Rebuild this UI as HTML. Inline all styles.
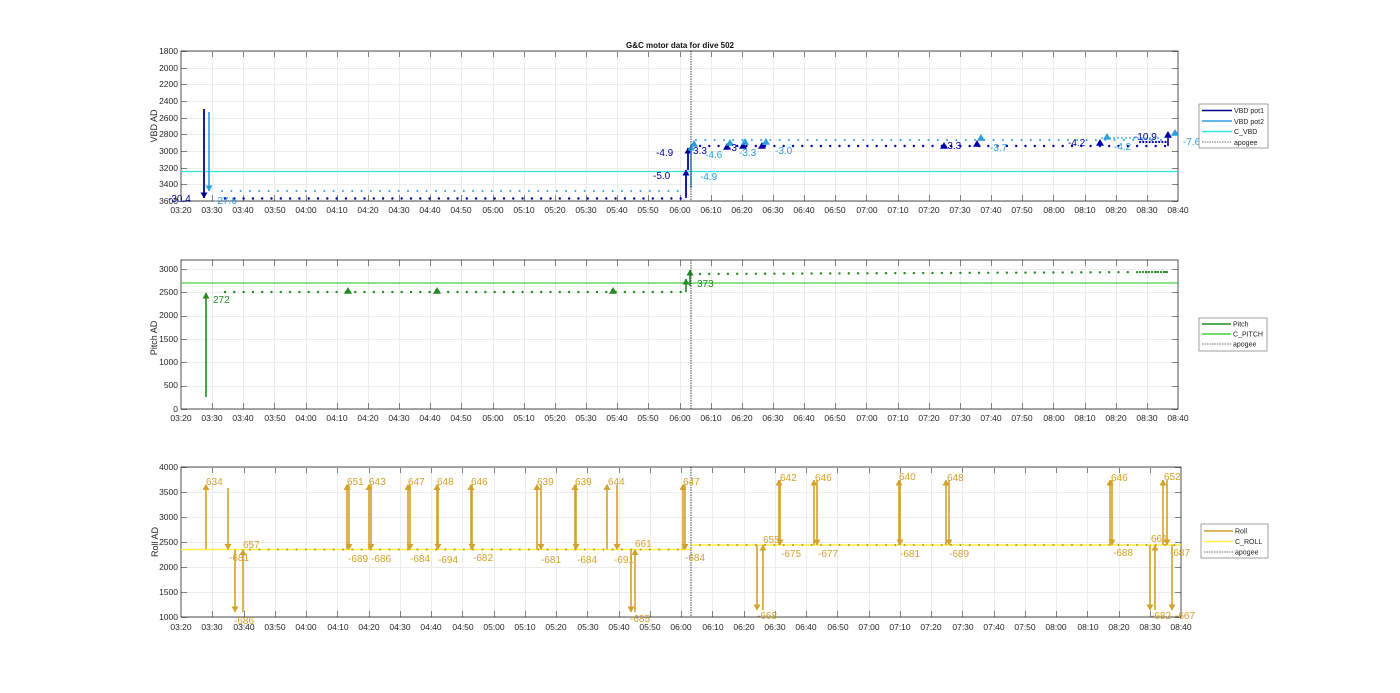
<!DOCTYPE html>
<html><head><meta charset="utf-8"><style>
html,body{margin:0;padding:0;background:#fff;width:1400px;height:693px;overflow:hidden}
svg text{font-family:"Liberation Sans",sans-serif;}
.tk{font-size:8.5px;fill:#262626}
</style></head><body>
<svg id="s" width="1400" height="693" viewBox="0 0 1400 693" xmlns="http://www.w3.org/2000/svg">
<g id="axes"></g>
<text x="680" y="48" font-size="8" font-weight="bold" text-anchor="middle" fill="#111">G&amp;C motor data for dive 502</text>
<text transform="translate(157,126) rotate(-90)" font-size="9" text-anchor="middle" fill="#262626">VBD AD</text>
<text transform="translate(157,338) rotate(-90)" font-size="9" text-anchor="middle" fill="#262626">Pitch AD</text>
<text transform="translate(158,542) rotate(-90)" font-size="9" text-anchor="middle" fill="#262626">Roll AD</text>
<g class="tk" text-anchor="end">
<text x="178" y="54">1800</text><text x="178" y="71">2000</text><text x="178" y="87">2200</text><text x="178" y="104">2400</text><text x="178" y="121">2600</text><text x="178" y="137">2800</text><text x="178" y="154">3000</text><text x="178" y="171">3200</text><text x="178" y="187">3400</text><text x="178" y="204">3600</text>
<text x="178" y="272">3000</text><text x="178" y="295">2500</text><text x="178" y="318">2000</text><text x="178" y="342">1500</text><text x="178" y="365">1000</text><text x="178" y="388">500</text><text x="178" y="412">0</text>
<text x="178" y="470">4000</text><text x="178" y="495">3500</text><text x="178" y="520">3000</text><text x="178" y="545">2500</text><text x="178" y="570">2000</text><text x="178" y="595">1500</text><text x="178" y="620">1000</text>
</g>
<g class="tk" text-anchor="middle">
<text x="181" y="213">03:20</text><text x="212" y="213">03:30</text><text x="243" y="213">03:40</text><text x="275" y="213">03:50</text><text x="306" y="213">04:00</text><text x="337" y="213">04:10</text><text x="368" y="213">04:20</text><text x="399" y="213">04:30</text><text x="430" y="213">04:40</text><text x="461" y="213">04:50</text><text x="493" y="213">05:00</text><text x="524" y="213">05:10</text><text x="555" y="213">05:20</text><text x="586" y="213">05:30</text><text x="617" y="213">05:40</text><text x="648" y="213">05:50</text><text x="680" y="213">06:00</text><text x="711" y="213">06:10</text><text x="742" y="213">06:20</text><text x="773" y="213">06:30</text><text x="804" y="213">06:40</text><text x="835" y="213">06:50</text><text x="867" y="213">07:00</text><text x="898" y="213">07:10</text><text x="929" y="213">07:20</text><text x="960" y="213">07:30</text><text x="991" y="213">07:40</text><text x="1022" y="213">07:50</text><text x="1054" y="213">08:00</text><text x="1085" y="213">08:10</text><text x="1116" y="213">08:20</text><text x="1147" y="213">08:30</text><text x="1178" y="213">08:40</text>
</g>
<g class="tk" text-anchor="middle">
<text x="181" y="421">03:20</text><text x="212" y="421">03:30</text><text x="243" y="421">03:40</text><text x="275" y="421">03:50</text><text x="306" y="421">04:00</text><text x="337" y="421">04:10</text><text x="368" y="421">04:20</text><text x="399" y="421">04:30</text><text x="430" y="421">04:40</text><text x="461" y="421">04:50</text><text x="493" y="421">05:00</text><text x="524" y="421">05:10</text><text x="555" y="421">05:20</text><text x="586" y="421">05:30</text><text x="617" y="421">05:40</text><text x="648" y="421">05:50</text><text x="680" y="421">06:00</text><text x="711" y="421">06:10</text><text x="742" y="421">06:20</text><text x="773" y="421">06:30</text><text x="804" y="421">06:40</text><text x="835" y="421">06:50</text><text x="867" y="421">07:00</text><text x="898" y="421">07:10</text><text x="929" y="421">07:20</text><text x="960" y="421">07:30</text><text x="991" y="421">07:40</text><text x="1022" y="421">07:50</text><text x="1054" y="421">08:00</text><text x="1085" y="421">08:10</text><text x="1116" y="421">08:20</text><text x="1147" y="421">08:30</text><text x="1178" y="421">08:40</text>
</g>
<g class="tk" text-anchor="middle">
<text x="181" y="630">03:20</text><text x="212" y="630">03:30</text><text x="244" y="630">03:40</text><text x="275" y="630">03:50</text><text x="306" y="630">04:00</text><text x="338" y="630">04:10</text><text x="369" y="630">04:20</text><text x="400" y="630">04:30</text><text x="431" y="630">04:40</text><text x="463" y="630">04:50</text><text x="494" y="630">05:00</text><text x="525" y="630">05:10</text><text x="556" y="630">05:20</text><text x="588" y="630">05:30</text><text x="619" y="630">05:40</text><text x="650" y="630">05:50</text><text x="681" y="630">06:00</text><text x="713" y="630">06:10</text><text x="744" y="630">06:20</text><text x="775" y="630">06:30</text><text x="806" y="630">06:40</text><text x="838" y="630">06:50</text><text x="869" y="630">07:00</text><text x="900" y="630">07:10</text><text x="931" y="630">07:20</text><text x="963" y="630">07:30</text><text x="994" y="630">07:40</text><text x="1025" y="630">07:50</text><text x="1056" y="630">08:00</text><text x="1088" y="630">08:10</text><text x="1119" y="630">08:20</text><text x="1150" y="630">08:30</text><text x="1181" y="630">08:40</text>
</g>
<g id="data"></g>
<g font-size="10">
<text x="168" y="202" fill="#0000a8">-30.4</text>
<text x="214" y="204" fill="#2a9fe0">-27.6</text>
<text x="653" y="179" fill="#0000a8">-5.0</text>
<text x="656" y="156" fill="#0000a8">-4.9</text>
<text x="700" y="180" fill="#2a9fe0">-4.9</text>
<text x="693" y="154" fill="#0000a8">3.3</text>
<text x="705" y="158" fill="#2a9fe0">-4.6</text>
<text x="728" y="151" fill="#0000a8">-3</text>
<text x="739" y="156" fill="#2a9fe0">-3.3</text>
<text x="775" y="154" fill="#2a9fe0">-3.0</text>
<text x="944" y="149" fill="#0000a8">-3.3</text>
<text x="990" y="151" fill="#2a9fe0">-3.7</text>
<text x="1068" y="146" fill="#0000a8">-4.2</text>
<text x="1114" y="150" fill="#2a9fe0">-4.2</text>
<text x="1134" y="140" fill="#0000a8">-10.9</text>
<text x="1183" y="145" fill="#2a9fe0">-7.6</text>
</g>
<g font-size="10" fill="#228b22"><text x="213" y="303">272</text><text x="697" y="287">373</text></g>
<g font-size="10" fill="#d4a12a">
<text x="206" y="485">634</text><text x="229" y="561">-681</text><text x="234" y="624">-686</text><text x="243" y="548">657</text>
<text x="347" y="485">651</text><text x="348" y="562">-689</text><text x="369" y="485">643</text><text x="371" y="562">-686</text>
<text x="408" y="485">647</text><text x="410" y="562">-684</text><text x="437" y="485">648</text><text x="438" y="563">-694</text>
<text x="471" y="485">646</text><text x="473" y="561">-682</text><text x="537" y="485">639</text><text x="541" y="563">-681</text>
<text x="575" y="485">639</text><text x="577" y="563">-684</text><text x="608" y="485">644</text><text x="614" y="563">-691</text>
<text x="630" y="622">-685</text><text x="635" y="547">661</text><text x="683" y="485">647</text><text x="685" y="561">-684</text>
<text x="757" y="619">-668</text><text x="763" y="543">655</text><text x="780" y="481">642</text><text x="781" y="557">-675</text>
<text x="815" y="481">646</text><text x="818" y="557">-677</text><text x="899" y="480">640</text><text x="900" y="557">-681</text>
<text x="947" y="481">648</text><text x="949" y="557">-689</text><text x="1111" y="481">646</text><text x="1113" y="556">-688</text>
<text x="1151" y="619">-682</text><text x="1151" y="542">661</text><text x="1164" y="480">652</text><text x="1170" y="556">-687</text><text x="1175" y="619">-667</text>
</g>
<g font-size="7" fill="#222">
<rect x="1199" y="104" width="69" height="44" fill="#fff" stroke="#888" stroke-width="0.8"/>
<line x1="1202" y1="110.5" x2="1232" y2="110.5" stroke="#00008b" stroke-width="1.5"/><text x="1234" y="113">VBD pot1</text>
<line x1="1202" y1="121" x2="1232" y2="121" stroke="#2a9fe0" stroke-width="1.5"/><text x="1234" y="124">VBD pot2</text>
<line x1="1202" y1="131.5" x2="1232" y2="131.5" stroke="#30e6e6" stroke-width="1.5"/><text x="1234" y="134">C_VBD</text>
<line x1="1202" y1="142" x2="1232" y2="142" stroke="#444" stroke-width="0.8" stroke-dasharray="1.5,1"/><text x="1234" y="145">apogee</text>
<rect x="1199" y="318" width="68" height="33" fill="#fff" stroke="#888" stroke-width="0.8"/>
<line x1="1202" y1="324" x2="1231" y2="324" stroke="#228b22" stroke-width="1.5"/><text x="1233" y="326.5">Pitch</text>
<line x1="1202" y1="334" x2="1231" y2="334" stroke="#40d040" stroke-width="1.5"/><text x="1233" y="336.5">C_PITCH</text>
<line x1="1202" y1="344" x2="1231" y2="344" stroke="#444" stroke-width="0.8" stroke-dasharray="1.5,1"/><text x="1233" y="346.5">apogee</text>
<rect x="1201" y="524" width="67" height="34" fill="#fff" stroke="#888" stroke-width="0.8"/>
<line x1="1204" y1="531" x2="1233" y2="531" stroke="#d4a12a" stroke-width="1.5"/><text x="1235" y="533.5">Roll</text>
<line x1="1204" y1="541.5" x2="1233" y2="541.5" stroke="#ffee44" stroke-width="1.5"/><text x="1235" y="544">C_ROLL</text>
<line x1="1204" y1="552" x2="1233" y2="552" stroke="#444" stroke-width="0.8" stroke-dasharray="1.5,1"/><text x="1235" y="554.5">apogee</text>
</g>
</svg>
<script>
(function(){
var NS="http://www.w3.org/2000/svg",ax=document.getElementById('axes'),dg=document.getElementById('data');
function el(p,t,a){var e=document.createElementNS(NS,t);for(var k in a)e.setAttribute(k,a[k]);p.appendChild(e);return e;}
function axes(x0,x1,y0,y1,ys){
 el(ax,'rect',{x:x0,y:y0,width:x1-x0,height:y1-y0,fill:'#fff'});
 var n=32,dx=(x1-x0)/n;
 for(var i=1;i<n;i++){var x=Math.round(x0+i*dx)+0.5;el(ax,'line',{x1:x,y1:y0,x2:x,y2:y1,stroke:'#ececec','stroke-width':1});
  el(ax,'line',{x1:x,y1:y1,x2:x,y2:y1-6,stroke:'#555','stroke-width':0.7});el(ax,'line',{x1:x,y1:y0,x2:x,y2:y0+6,stroke:'#555','stroke-width':0.7});}
 ys.forEach(function(y){y=Math.round(y)+0.5;el(ax,'line',{x1:x0,y1:y,x2:x1,y2:y,stroke:'#ececec','stroke-width':1});
  el(ax,'line',{x1:x0,y1:y,x2:x0+6,y2:y,stroke:'#555','stroke-width':0.7});el(ax,'line',{x1:x1,y1:y,x2:x1-6,y2:y,stroke:'#555','stroke-width':0.7});});
 el(ax,'rect',{x:x0,y:y0,width:x1-x0,height:y1-y0,fill:'none',stroke:'#262626','stroke-width':0.8});
}
var t=[];for(var i=0;i<10;i++)t.push(51+i*16.67);axes(181,1178,51,201,t);
t=[];for(i=0;i<7;i++)t.push(409-i*23.33);axes(181,1178,260,409,t);
t=[];for(i=0;i<7;i++)t.push(617-i*25);axes(181,1181,467,617,t);
function hl(x0,x1,y,c,w){el(dg,'line',{x1:x0,y1:y,x2:x1,y2:y,stroke:c,'stroke-width':w||1.3});}
function vl(x,y0,y1,c,w,d){var a={x1:x,y1:y0,x2:x,y2:y1,stroke:c,'stroke-width':w||1.5};if(d)a['stroke-dasharray']=d;el(dg,'line',a);}
function dots(x0,x1,step,y,c,r,jit){for(var x=x0;x<=x1;x+=step){el(dg,'circle',{cx:x,cy:y+(jit?jit(x):0),r:r||1.1,fill:c});}}
function tri(x,y,up,c,s){s=s||4;var p=up?[x,y-s,x-s,y+s*0.7,x+s,y+s*0.7]:[x,y+s,x-s,y-s*0.7,x+s,y-s*0.7];el(dg,'polygon',{points:p.join(','),fill:c});}
function arr(x,ya,yb,c,w){vl(x,ya,yb,c,w||1.6);tri(x,yb+(yb<ya?3:-3),yb<ya,c,3.5);}
var DB='#0000a8',LB='#2a9fe0',CY='#30e6e6';
hl(181,1178,171.5,CY,1.3);
dots(225,682,9.3,198.5,DB,1.2);dots(222,680,9.3,191,LB,1);
dots(700,1170,9.3,146,DB,1.2);dots(696,1168,9.3,140,LB,1);
dots(1140,1168,3.2,142,DB,1.1);dots(1102,1160,4,138,LB,0.9);
arr(204,109,198,'#00008b',1.8);arr(209,112,191,LB,1.6);
arr(686,198,170,DB,1.8);arr(688,170,148,DB,1.8);arr(691,188,145,LB,1.6);
[[727,147],[743,146],[762,146],[944,146],[977,144],[1100,143],[1168,135]].forEach(function(p){tri(p[0],p[1],1,DB,4);});
[[694,144],[730,143],[745,142],[766,142],[981,138],[1107,137],[1175,133]].forEach(function(p){tri(p[0],p[1],1,LB,4);});
vl(1168,146,136,DB,1.6);
hl(181,1178,283,'#40d040',1.3);
dots(225,682,9.3,292,'#228b22',1.2);dots(700,1170,9.3,274,'#228b22',1.2,function(x){return -(x-700)/470*2;});
dots(1140,1168,3,272,'#228b22',1.1);
arr(206,397,293,'#228b22',1.6);tri(348,291,1,'#228b22',4);tri(437,291,1,'#228b22',4);tri(613,291,1,'#228b22',4);
arr(686,292,279,'#228b22',1.6);arr(690,286,270,'#228b22',1.6);
var G='#d4a12a';
hl(181,691,549.5,'#ffee44',1.5);hl(691,1181,545,'#ffee44',1.5);
dots(250,685,9.3,549.5,'#b8962a',1);dots(700,1175,9.3,545,'#b8962a',1);
var U=484.5,M=549.5,M2=545;
arr(206,549,U,G);arr(228,488,M,G);arr(235,M,612,G);arr(243,612,M,G);
[[347,349],[369,371],[408,410],[437,438],[471,472],[537,541],[575,576],[607,617],[683,685]].forEach(function(p){arr(p[0],M,U,G);arr(p[1],U,M,G);});
arr(631,M,612,G);arr(635,612,M,G);
arr(757,M2,610,G);arr(763,610,M2,G);
[[779,780],[814,817],[899,900],[946,949],[1110,1112]].forEach(function(p){arr(p[0],M2,480,G);arr(p[1],480,M2,G);});
arr(1150,M2,610,G);arr(1155,610,M2,G);arr(1163,M2,480,G);arr(1167,480,M2,G);arr(1172,M2,610,G);
[[51,201],[260,409],[467,617]].forEach(function(r){vl(691,r[0],r[1],'#333',0.9,'1.5,1');});
})();
</script>
</body></html>
